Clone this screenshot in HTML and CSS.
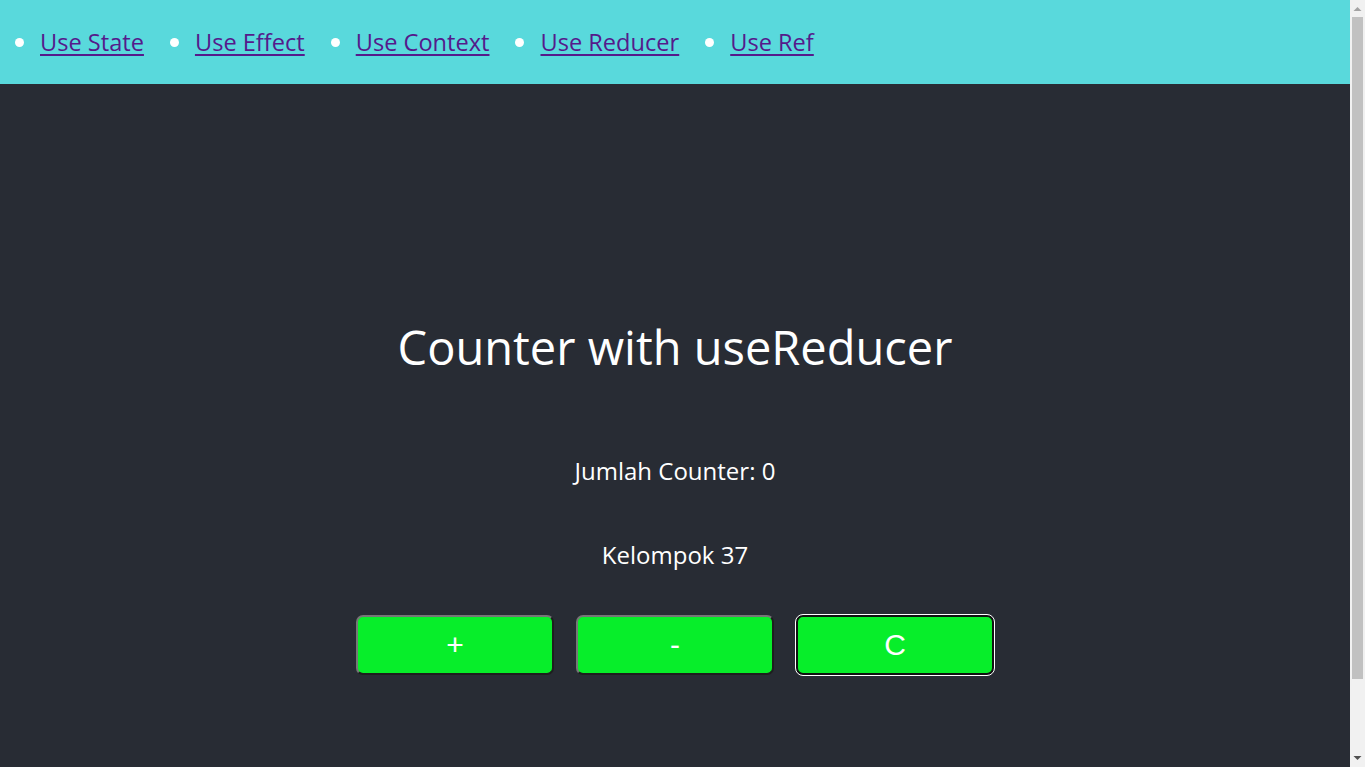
FILE: index.html
```html
<!DOCTYPE html>
<html lang="id">
<head>
<meta charset="utf-8">
<title>Counter with useReducer</title>
<link rel="stylesheet" href="styles.css">
</head>
<body>
<div class="page">
  <header class="nav">
    <ul class="nav-list">
      <li class="nav-item"><a class="nav-link" href="#state">Use State</a></li>
      <li class="nav-item"><a class="nav-link" href="#effect">Use Effect</a></li>
      <li class="nav-item"><a class="nav-link" href="#context">Use Context</a></li>
      <li class="nav-item"><a class="nav-link" href="#reducer">Use Reducer</a></li>
      <li class="nav-item"><a class="nav-link" href="#ref">Use Ref</a></li>
    </ul>
  </header>
  <main class="app">
    <h1 class="title">Counter with useReducer</h1>
    <p class="text count">Jumlah Counter: 0</p>
    <p class="text group">Kelompok 37</p>
    <div class="buttons">
      <button class="btn" type="button">+</button>
      <button class="btn" type="button">-</button>
      <button class="btn btn-focus" type="button">C</button>
    </div>
  </main>
</div>
<div class="scrollbar" aria-hidden="true">
  <div class="sb-arrow"><svg width="15" height="17" viewBox="0 0 15 17"><polygon points="3.5,11 7.5,7 11.5,11" fill="#a3a3a3"/></svg></div>
  <div class="sb-track"><div class="sb-thumb"></div></div>
  <div class="sb-arrow"><svg width="15" height="17" viewBox="0 0 15 17"><polygon points="3.5,6 11.5,6 7.5,10" fill="#505050"/></svg></div>
</div>
</body>
</html>
```
FILE: styles.css
```css
html, body {
  margin: 0;
  padding: 0;
  height: 100%;
  overflow: hidden;
}
body {
  display: flex;
  font-family: "Open Sans", "Noto Sans", sans-serif;
  background: #282c34;
}
.page {
  flex: 1;
  min-width: 0;
  display: flex;
  flex-direction: column;
}
.scrollbar {
  width: 15px;
  flex: none;
  background: #f1f1f1;
  display: flex;
  flex-direction: column;
}
.sb-arrow {
  height: 17px;
  flex: none;
}
.sb-arrow svg {
  display: block;
}
.sb-track {
  flex: 1;
  padding: 0 1px 0 1px;
}
.sb-thumb {
  height: 662px;
  background: #c1c1c1;
  margin: 0 1px;
}
.nav {
  background: #59d9dc;
}
.nav-list {
  list-style: none;
  margin: 0;
  padding: 0 0 0 15px;
  height: 84px;
  display: flex;
  align-items: center;
  gap: 26px;
}
.nav-item {
  display: flex;
  align-items: center;
}
.nav-item::before {
  content: "";
  width: 9px;
  height: 9px;
  border-radius: 50%;
  background: #ffffff;
  margin-right: 16px;
}
.nav-link {
  color: #551a8b;
  font-size: 23.6px;
  line-height: 30px;
  text-decoration: underline;
  text-underline-offset: 3px;
}
.app {
  flex: 1;
  padding-top: 236px;
  color: #ffffff;
  text-align: center;
}
.title {
  margin: 0;
  font-size: 47px;
  line-height: 54px;
  font-weight: 400;
}
.text {
  margin: 0;
  font-size: 24px;
  line-height: 32px;
}
.count {
  margin-top: 81px;
}
.group {
  margin-top: 52px;
}
.buttons {
  margin-top: 44px;
  display: flex;
  justify-content: center;
  gap: 22px;
}
.btn {
  width: 198px;
  height: 60px;
  background: #07ee2a;
  color: #ffffff;
  font-family: "Liberation Sans", Arial, sans-serif;
  font-size: 30px;
  border: 2px solid;
  border-color: #767676 #1e1e1e #1e1e1e #767676;
  border-radius: 7px;
  padding: 0;
}
.btn-focus {
  border-color: #111111;
  outline: 1px solid #ffffff;
  outline-offset: 0;
}
```
